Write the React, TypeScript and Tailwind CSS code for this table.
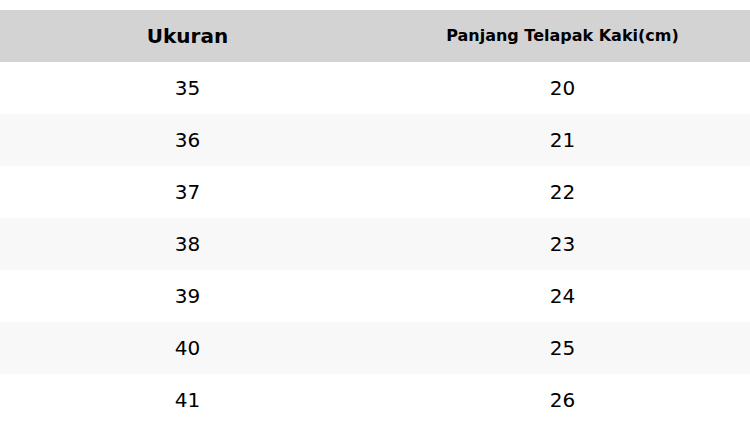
import React from "react";

const rows = [
  ["35", "20"],
  ["36", "21"],
  ["37", "22"],
  ["38", "23"],
  ["39", "24"],
  ["40", "25"],
  ["41", "26"],
];

export default function App() {
  return (
    <div className="w-[750px] h-[426px] bg-white pt-[10px] overflow-hidden" style={{ fontFamily: '"DejaVu Sans", sans-serif' }}>
      <div className="grid grid-cols-2 h-[52px] bg-[#d3d3d3] text-black font-bold items-center text-center">
        <div className="text-[20px]">Ukuran</div>
        <div className="text-[16px]">Panjang Telapak Kaki(cm)</div>
      </div>
      {rows.map((r, i) => (
        <div
          key={r[0]}
          className={`grid grid-cols-2 h-[52px] items-center text-center text-[20px] text-black ${i % 2 === 1 ? "bg-[#f8f8f8]" : "bg-white"}`}
        >
          <div>{r[0]}</div>
          <div>{r[1]}</div>
        </div>
      ))}
    </div>
  );
}
